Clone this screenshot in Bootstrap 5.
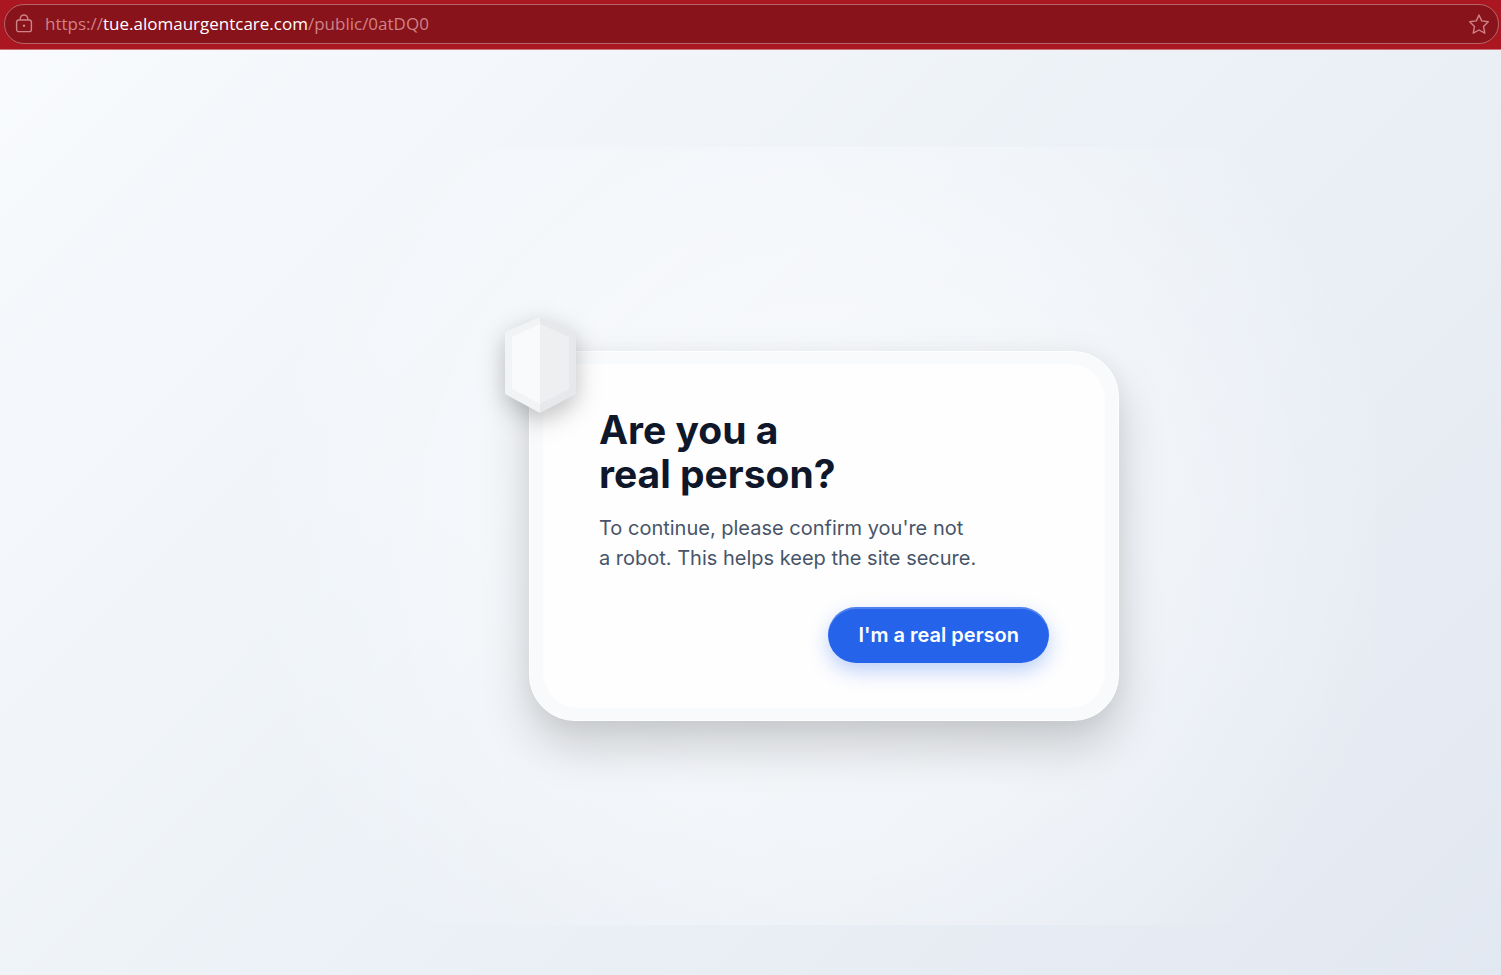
<!DOCTYPE html>
<html lang="en">
<head>
<meta charset="utf-8">
<meta name="viewport" content="width=device-width, initial-scale=1">
<title>Are you a real person?</title>
<link href="https://cdn.jsdelivr.net/npm/bootstrap@5.3.0/dist/css/bootstrap.min.css" rel="stylesheet">
<style>
  body { font-family: Inter, "Liberation Sans", sans-serif; color: #0f172a; }
  .address-bar { background: #ab1720; border-bottom: 1px solid #c9757b; padding: 4px 2px 5px 4px; }
  .address-field { height: 40px; background: #88131a; border: 1px solid #b5656b; color: #cf8288; padding: 0 8px 0 10px; }
  .address-url { font: 17px/24px "Open Sans", "Noto Sans", sans-serif; color: #cf8288; }
  .address-url strong { font-weight: 400; color: #fff; }
  .star-btn { color: #cf8288; line-height: 0; }
  .stage { background: linear-gradient(135deg, #f8fafd 0%, #f1f5f9 30%, #e2e8f1 100%); padding: 46px 0 0 147px; }
  .glow { padding: 204px 256px; background: radial-gradient(circle farthest-side, rgba(255,255,255,.6) 0%, rgba(255,255,255,.4) 55%, rgba(255,255,255,0) 105%); }
  .verify-card { width: 590px; max-width: 100%; padding: 12px 13px; background: #f8fafc; border: 1px solid #fff; border-radius: 46px; box-shadow: 0 24px 48px rgba(0,0,0,.18), 0 4px 20px rgba(0,0,0,.04); }
  .verify-body { padding: 44px 56px 45px; background: #fefefe; border-radius: 36px; }
  .verify-body h1 { font-size: 39px; line-height: 44px; margin-bottom: 17px; }
  .verify-body p { font-size: 20px; line-height: 30px; color: #475569; margin-bottom: 34px; }
  .shield { left: -26px; top: -36px; filter: drop-shadow(0 8px 12px rgba(0,0,0,.25)); }
  .verify-btn { height: 56px; padding: 0 30px; font-size: 20px; font-weight: 600; --bs-btn-bg: #2563eb; --bs-btn-border-color: #2563eb; border: 0; box-shadow: 0 8px 20px rgba(37,99,235,.3), inset 0 2px 0 rgba(255,255,255,.2); }
</style>
</head>
<body class="d-flex flex-column min-vh-100">
<header class="address-bar">
  <div class="address-field d-flex align-items-center rounded-pill">
    <svg width="18" height="20" viewBox="0 0 18 20" fill="none" stroke="currentColor" stroke-width="1.4" aria-hidden="true"><rect x="1.6" y="6" width="14.8" height="11.6" rx="2.2"/><path d="M5.2 6V4.8a3.8 3.8 0 0 1 7.6 0V6"/><circle cx="9" cy="11.7" r="1.2" fill="currentColor" stroke="none"/></svg>
    <a class="address-url text-decoration-none ms-2 ps-1 me-auto" href="#">https://<strong>tue.alomaurgentcare.com</strong>/public/0atDQ0</a>
    <button class="star-btn btn p-0 border-0" type="button" aria-label="Add to favorites">
      <svg width="22" height="22" viewBox="0 0 22 22" fill="none" stroke="currentColor" stroke-width="1.4" stroke-linejoin="round"><path d="M11 2l2.7 5.9 6.6.8-4.8 4.7 1.3 6.8-5.8-3.2-5.8 3.2 1.3-6.8L1.7 8.7l6.6-.8z"/></svg>
    </button>
  </div>
</header>
<main class="stage flex-grow-1 d-flex align-items-center justify-content-center overflow-hidden">
  <div class="glow">
    <section class="verify-card position-relative">
      <svg class="shield position-absolute" width="74" height="98" viewBox="0 0 74 98" aria-hidden="true">
        <path d="M36 1L1 16v62l35 19z" fill="#f1f3f5"/><path d="M36 1l36 15v62L36 97z" fill="#e6e8ec"/>
        <path d="M36 8L8 21v52l28 15z" fill="#f8fafc"/><path d="M36 8l29 13v52L36 88z" fill="#eeeff1"/>
      </svg>
      <div class="verify-body">
        <h1 class="fw-bold">Are you a<br>real person?</h1>
        <p>To continue, please confirm you're not<br>a robot. This helps keep the site secure.</p>
        <div class="d-flex justify-content-end"><button class="verify-btn btn btn-primary rounded-pill" type="button">I'm a real person</button></div>
      </div>
    </section>
  </div>
</main>
<script src="https://cdn.jsdelivr.net/npm/bootstrap@5.3.0/dist/js/bootstrap.bundle.min.js"></script>
</body>
</html>
